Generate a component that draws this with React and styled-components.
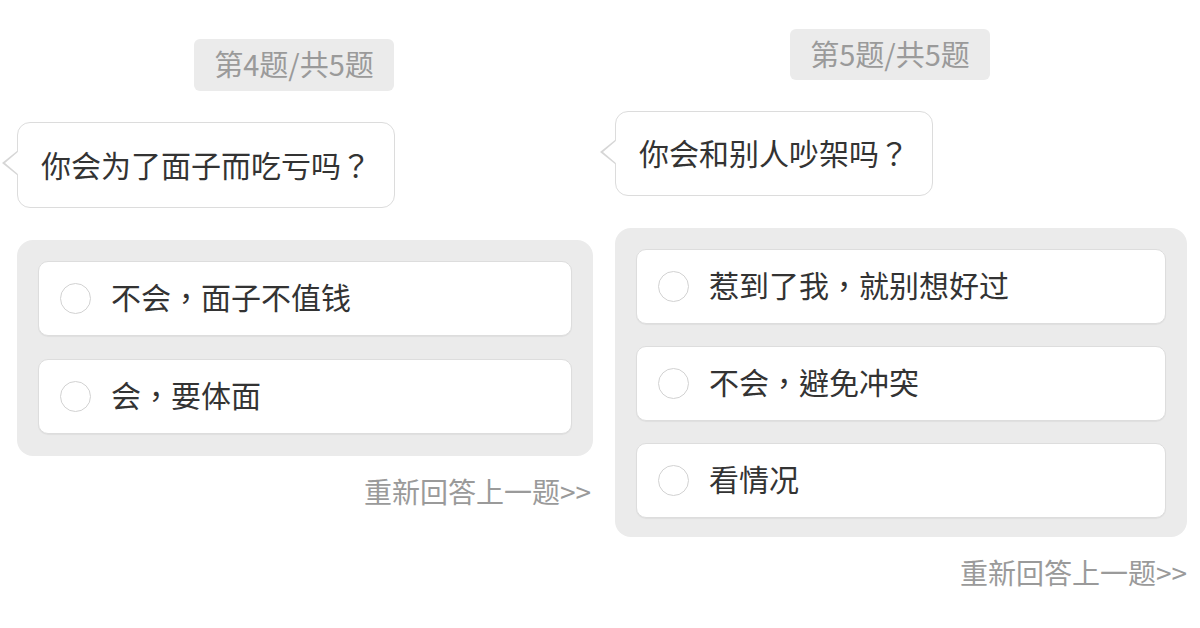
import React from "react";
import styled, { createGlobalStyle } from "styled-components";

const GlobalStyle = createGlobalStyle`
  body {
    margin: 0;
    background: #ffffff;
    font-family: "Noto Sans CJK TC", "Noto Sans CJK SC", "Noto Sans", sans-serif;
  }
`;

const Page = styled.div`
  display: flex;
  width: 1200px;
  height: 628px;
  background: #ffffff;
`;

const Column = styled.div`
  width: 600px;
  box-sizing: border-box;
  display: flex;
  flex-direction: column;
  padding: ${(p) => p.$top}px ${(p) => p.$right}px 0 ${(p) => p.$left}px;
`;

const Counter = styled.div`
  align-self: center;
  margin-right: 22px;
  height: ${(p) => p.$height}px;
  box-sizing: border-box;
  padding: 0 20px 3px;
  display: flex;
  align-items: center;
  background: #ebebeb;
  border-radius: 6px;
  color: #9a9a9a;
  font-size: 29px;
  line-height: 1;
`;

const Bubble = styled.div`
  position: relative;
  align-self: flex-start;
  margin-top: 31px;
  height: ${(p) => p.$height}px;
  box-sizing: border-box;
  padding: 0 23px 3px;
  display: flex;
  align-items: center;
  background: #ffffff;
  border: 1.5px solid #dcdcdc;
  border-radius: 13px;
  color: #333333;
  font-size: 30px;
  line-height: 1;

  &::before,
  &::after {
    content: "";
    position: absolute;
    top: 50%;
    margin-top: -14px;
    border-top: 12px solid transparent;
    border-bottom: 12px solid transparent;
  }

  &::before {
    left: -16px;
    border-right: 15px solid #d6d6d6;
  }

  &::after {
    left: -13.5px;
    border-right: 14px solid #ffffff;
  }
`;

const OptionPanel = styled.div`
  margin-top: 32px;
  padding: 21px 21px ${(p) => p.$bottom}px;
  background: #ebebeb;
  border-radius: 16px;
  display: flex;
  flex-direction: column;
  gap: ${(p) => p.$gap}px;
`;

const Option = styled.div`
  height: 75px;
  box-sizing: border-box;
  display: flex;
  align-items: center;
  gap: 20px;
  padding: 0 0 0 21px;
  background: #ffffff;
  border: 1px solid #dddddd;
  border-radius: 10px;
  box-shadow: 0 1px 1px rgba(0, 0, 0, 0.05);
  color: #333333;
  font-size: 30px;
  line-height: 1;
  cursor: pointer;
`;

const OptionText = styled.span`
  margin-top: -5px;
`;

const Radio = styled.span`
  width: 31px;
  height: 31px;
  box-sizing: border-box;
  border-radius: 50%;
  border: 1.5px solid #d2d2d2;
  background: #ffffff;
  flex-shrink: 0;
  margin-top: -1px;
`;

const BackLink = styled.div`
  align-self: flex-end;
  margin-top: 21px;
  margin-right: ${(p) => p.$right}px;
  color: #9a9a9a;
  font-size: 28px;
  line-height: 1;
  cursor: pointer;
`;

const questions = [
  {
    index: 4,
    text: "你会为了面子而吃亏吗？",
    options: ["不会，面子不值钱", "会，要体面"],
    layout: { top: 39, left: 17, right: 7, bottom: 22, gap: 23, tag: 52, bubble: 86, link: 2 },
  },
  {
    index: 5,
    text: "你会和别人吵架吗？",
    options: ["惹到了我，就别想好过", "不会，避免冲突", "看情况"],
    layout: { top: 29, left: 15, right: 13, bottom: 19, gap: 22, tag: 51, bubble: 85, link: 0 },
  },
];

function QuestionCard({ question, total }) {
  const { layout } = question;
  return (
    <Column $top={layout.top} $left={layout.left} $right={layout.right}>
      <Counter $height={layout.tag}>
        第{question.index}题/共{total}题
      </Counter>
      <Bubble $height={layout.bubble}>{question.text}</Bubble>
      <OptionPanel $bottom={layout.bottom} $gap={layout.gap}>
        {question.options.map((opt) => (
          <Option key={opt}>
            <Radio />
            <OptionText>{opt}</OptionText>
          </Option>
        ))}
      </OptionPanel>
      <BackLink $right={layout.link}>重新回答上一题&gt;&gt;</BackLink>
    </Column>
  );
}

export default function App() {
  return (
    <Page>
      <GlobalStyle />
      {questions.map((q) => (
        <QuestionCard key={q.index} question={q} total={5} />
      ))}
    </Page>
  );
}
